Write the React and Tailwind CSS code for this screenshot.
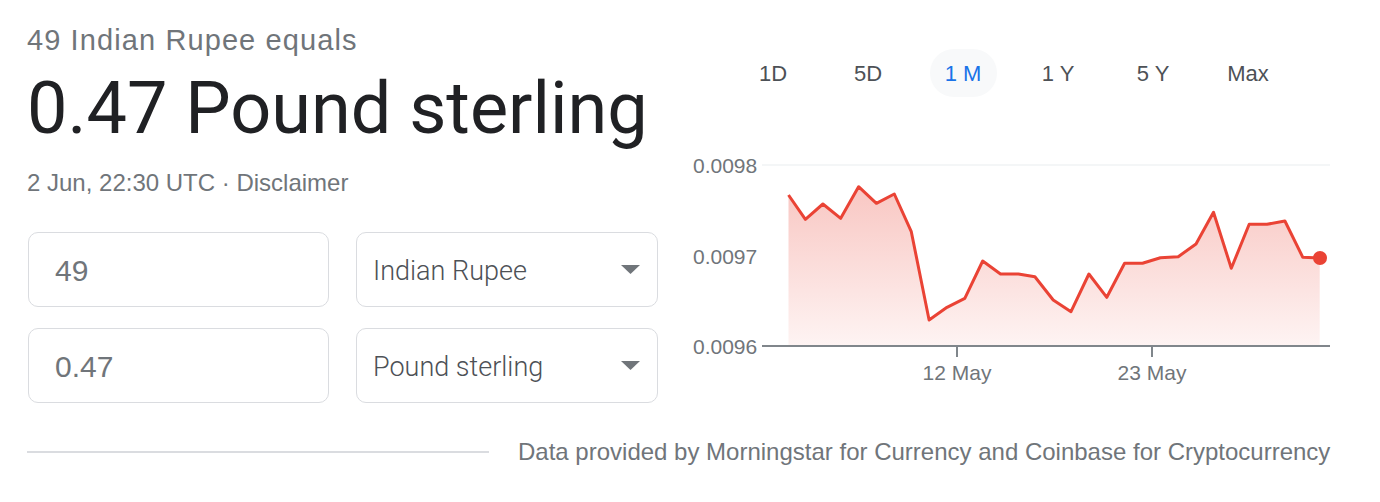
import React from "react";

const ARIAL = { fontFamily: '"Liberation Sans", Arial, sans-serif' };
const ROBOTO = { fontFamily: 'Roboto, "Liberation Sans", sans-serif' };
const ROBOTO_LIGHT = { fontFamily: '"Roboto Light", Roboto, "Liberation Sans", sans-serif' };

const RATES = [
  [788.5, 195], [805.4, 219.3], [822.9, 204], [840.7, 218.3], [858.6, 186.7],
  [876.4, 203.3], [894.3, 194], [911.3, 231.7], [929.1, 320], [947, 307.3],
  [964.8, 298.3], [982.7, 261], [1000.5, 274], [1018.4, 274], [1034.9, 276.7],
  [1053.2, 300], [1071, 311.7], [1088.9, 274], [1106.8, 297.3], [1124.6, 263.3],
  [1142.5, 263.3], [1160.4, 257.7], [1178.2, 256.7], [1196, 244], [1213.5, 212.3],
  [1231.3, 268.3], [1249.2, 224.3], [1267, 224.3], [1284.9, 221], [1302.8, 257.3],
  [1319.7, 258],
];

const TABS = ["1D", "5D", "1 M", "1 Y", "5 Y", "Max"];

function Caret() {
  return (
    <svg width="19" height="9" viewBox="0 0 19 9">
      <polygon points="0,0 19,0 9.5,9" fill="#70757a" />
    </svg>
  );
}

function AmountRow({ amount, currency }) {
  return (
    <div className="flex gap-[27px]">
      <div className="w-[301px] h-[75px] border border-[#dadce0] rounded-[10px] flex items-center pl-[26px] pt-[2px]">
        <span className="text-[30px] text-[#70757a]" style={ARIAL}>
          {amount}
        </span>
      </div>
      <div className="w-[302px] h-[75px] border border-[#dadce0] rounded-[10px] flex items-center justify-between pl-[16px] pr-[17px]">
        <span className="text-[27px] font-light text-[#4d5156] pt-[3px]" style={ROBOTO_LIGHT}>
          {currency}
        </span>
        <Caret />
      </div>
    </div>
  );
}

function Chart() {
  const line = RATES.map(([x, y], i) => `${i ? "L" : "M"}${x} ${y}`).join(" ");
  const area = `${line} L1319.7 346 L788.5 346 Z`;
  return (
    <svg width="660" height="250" viewBox="680 140 660 250" className="block">
      <defs>
        <linearGradient id="fade" x1="0" y1="0" x2="0" y2="1">
          <stop offset="0" stopColor="#ea4335" stopOpacity="0.3" />
          <stop offset="1" stopColor="#ea4335" stopOpacity="0.06" />
        </linearGradient>
      </defs>
      <g style={ARIAL} fontSize="21" fill="#70757a">
        <text x="693" y="172.5">0.0098</text>
        <text x="693" y="263.5">0.0097</text>
        <text x="693" y="353.5">0.0096</text>
        <text x="957" y="380" textAnchor="middle">12 May</text>
        <text x="1152" y="380" textAnchor="middle">23 May</text>
      </g>
      <line x1="762" y1="165" x2="1330" y2="165" stroke="#f1f3f4" strokeWidth="1.5" />
      <path d={area} fill="url(#fade)" />
      <line x1="762" y1="346" x2="1330" y2="346" stroke="#80868b" strokeWidth="2" />
      <line x1="957" y1="346" x2="957" y2="357" stroke="#80868b" strokeWidth="2" />
      <line x1="1152" y1="346" x2="1152" y2="357" stroke="#80868b" strokeWidth="2" />
      <path d={line} fill="none" stroke="#ea4335" strokeWidth="3" strokeLinejoin="round" />
      <circle cx="1320" cy="258" r="7" fill="#ea4335" />
    </svg>
  );
}

export default function App() {
  return (
    <div className="w-[1380px] h-[502px] bg-white overflow-hidden">
      <div className="flex">
        {/* converter */}
        <div className="w-[680px] pl-[27px]">
          <div className="pt-[23px] leading-[34px] text-[29px] tracking-[1.1px] text-[#70757a]" style={ARIAL}>
            49 Indian Rupee equals
          </div>
          <div className="mt-[12px] leading-[80px] text-[72px] text-[#202124]" style={ROBOTO}>
            0.47 Pound sterling
          </div>
          <div className="mt-[19px] leading-[30px] text-[24px] text-[#70757a]" style={ARIAL}>
            2 Jun, 22:30 UTC · Disclaimer
          </div>
          <div className="mt-[34px] flex flex-col gap-[21px] pl-[1px]">
            <AmountRow amount="49" currency="Indian Rupee" />
            <AmountRow amount="0.47" currency="Pound sterling" />
          </div>
        </div>

        {/* chart */}
        <div className="flex-1">
          <div className="flex pl-[45.5px] pt-[49px]">
            {TABS.map((t) => (
              <div key={t} className="w-[95px] flex justify-center">
                <span
                  className={
                    t === "1 M"
                      ? "w-[67px] h-[48px] rounded-full bg-[#f8f9fa] flex items-center justify-center text-[22px] text-[#1a73e8]"
                      : "w-[67px] h-[48px] flex items-center justify-center text-[22px] text-[#4d5156]"
                  }
                  style={ARIAL}
                >
                  {t}
                </span>
              </div>
            ))}
          </div>
          <div className="mt-[43px]">
            <Chart />
          </div>
        </div>
      </div>

      {/* footer */}
      <div className="flex items-center h-[40px] mt-[29px]">
        <div className="ml-[27px] w-[462px] h-[2px] bg-[#dadce0]" />
        <div className="ml-[29px] text-[24px] text-[#70757a]" style={ARIAL}>
          Data provided by Morningstar for Currency and Coinbase for Cryptocurrency
        </div>
      </div>
    </div>
  );
}
